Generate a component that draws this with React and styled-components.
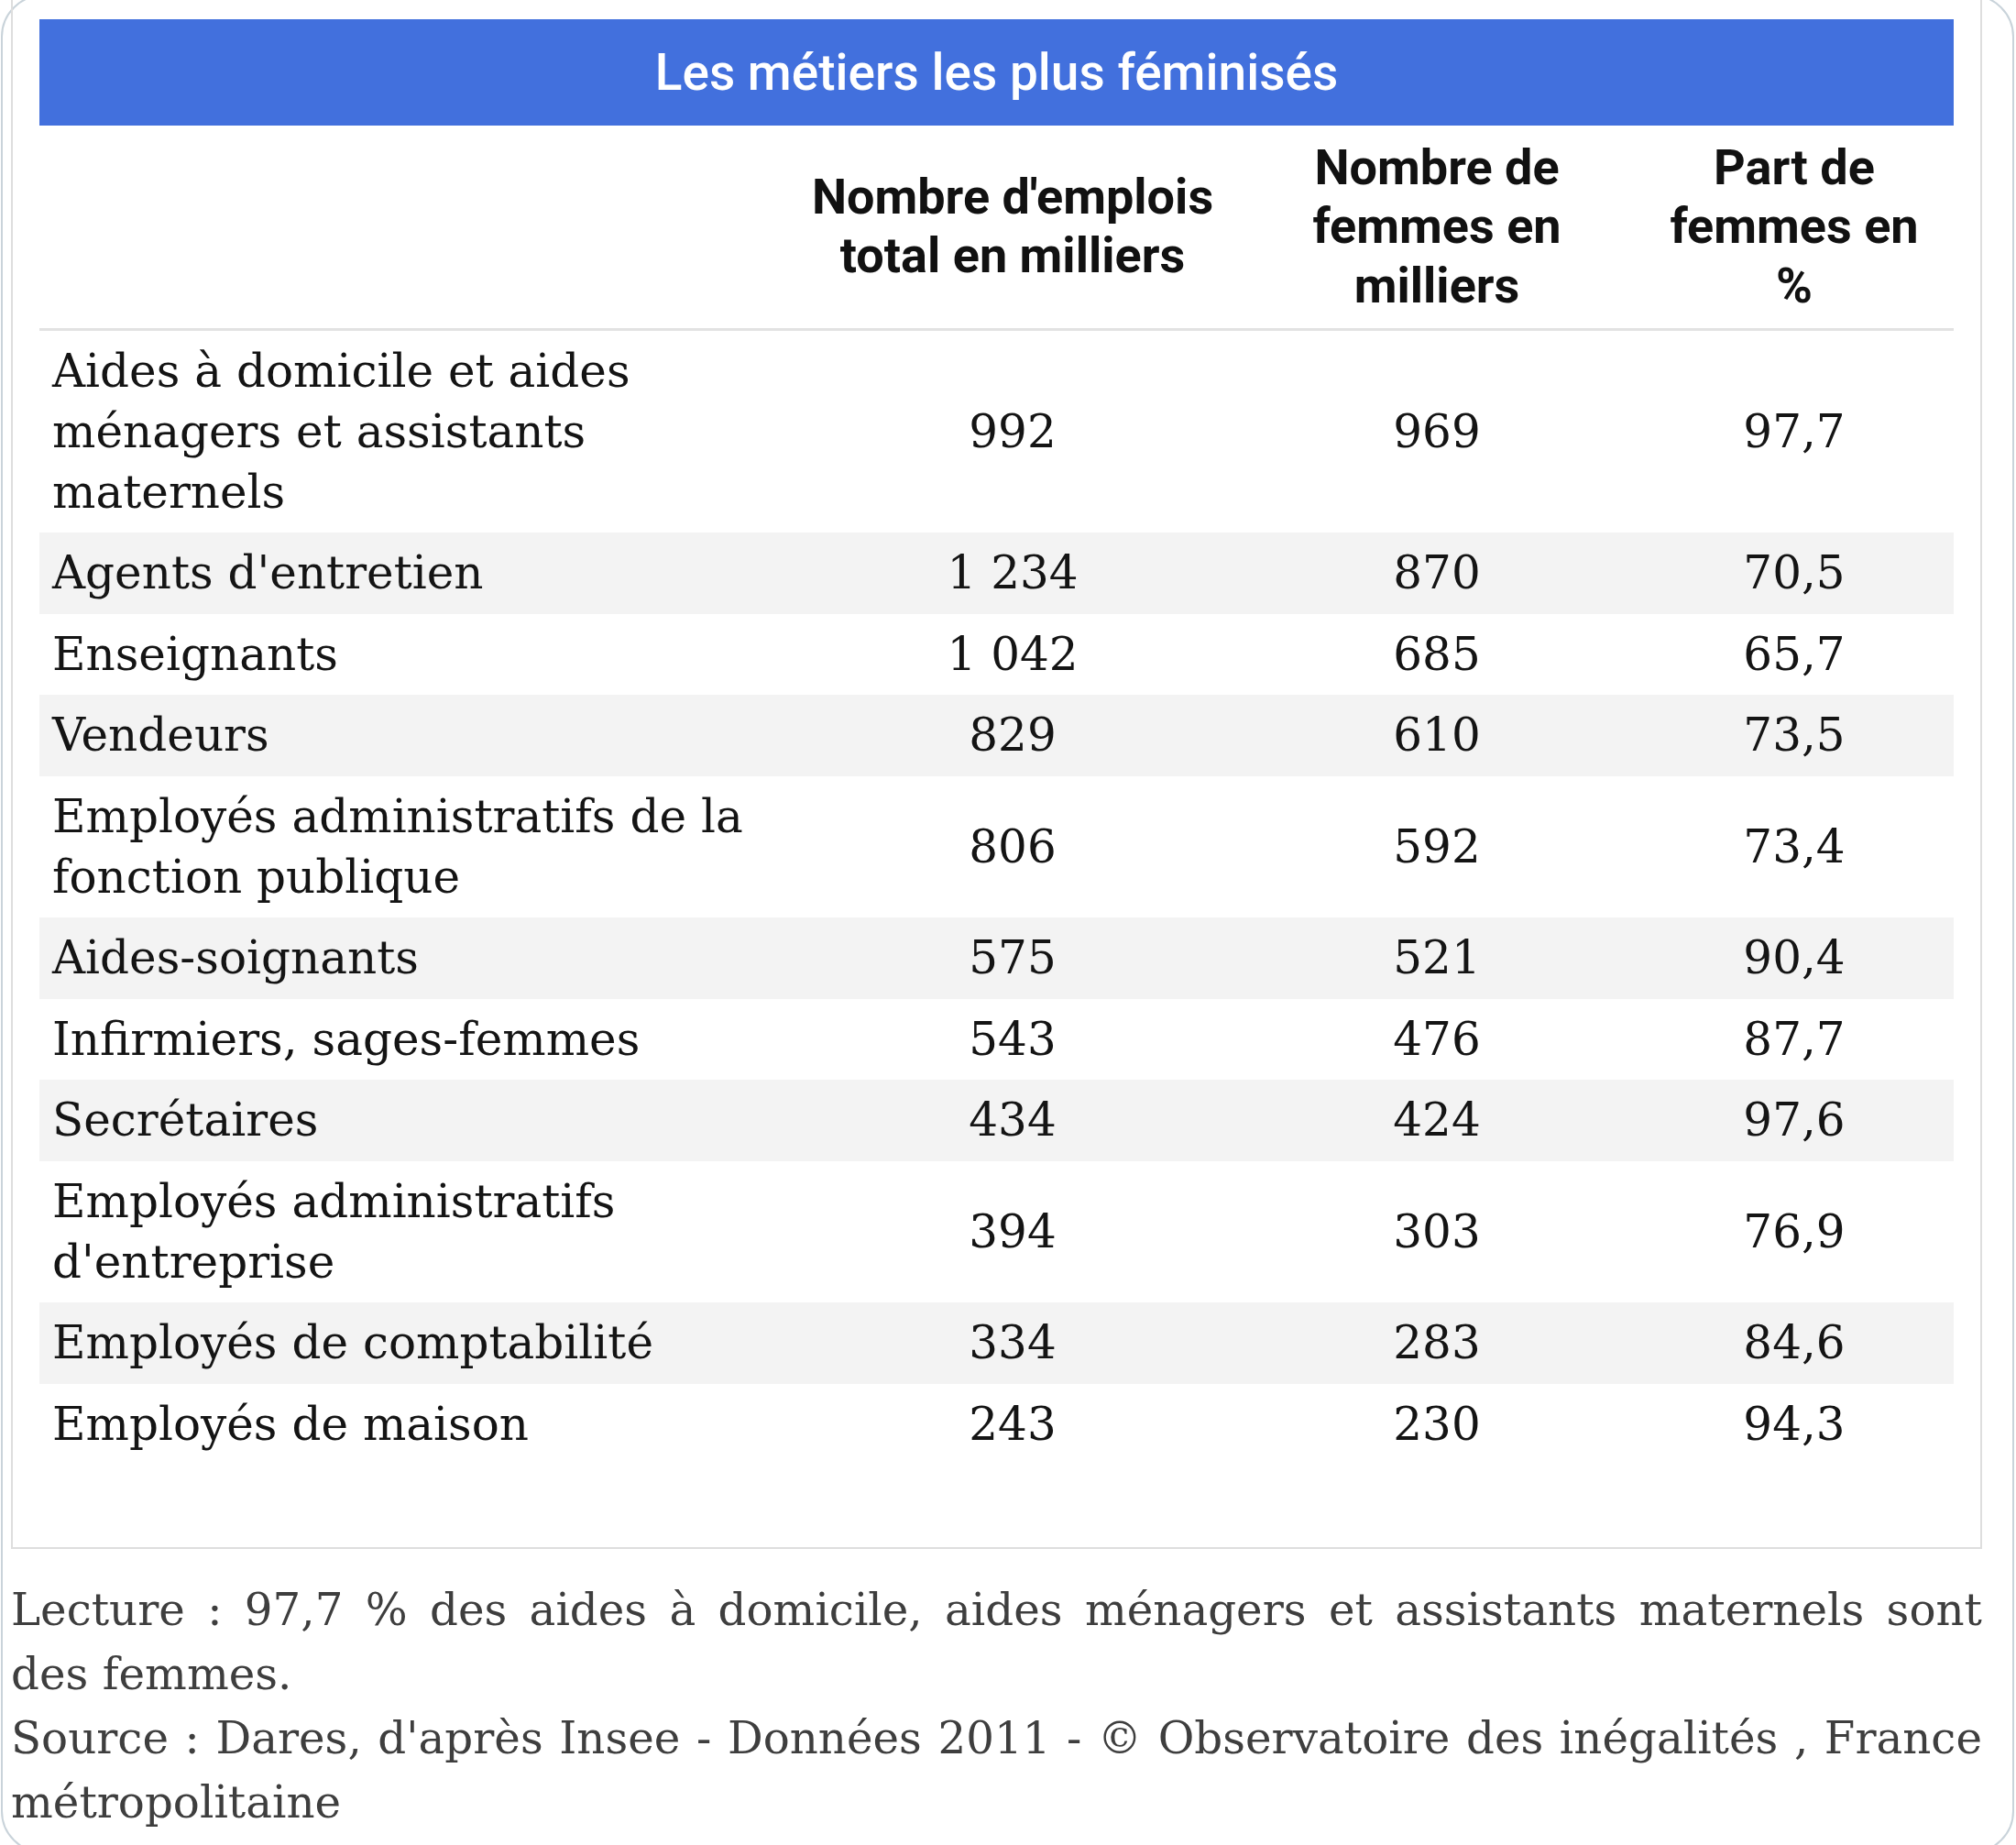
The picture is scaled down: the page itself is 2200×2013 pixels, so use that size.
import React from "react";
import styled, { createGlobalStyle } from "styled-components";

const GlobalStyle = createGlobalStyle`
  html, body {
    margin: 0;
    padding: 0;
    background: #ffffff;
    overflow: hidden;
  }
  * { box-sizing: border-box; }
`;

const Card = styled.div`
  margin: -6px 2px 0 1px;
  min-height: 2028px;
  border: 2px solid #c9d3da;
  border-radius: 46px;
  padding: 0 33px 0 9px;
  background: #fff;
`;

const Frame = styled.div`
  border: 2px solid #dedede;
  padding: 23px 29px 90px;
`;

const Title = styled.div`
  height: 116px;
  background: #4270dd;
  color: #fff;
  display: flex;
  align-items: center;
  justify-content: center;
  font-family: Roboto, "Open Sans", sans-serif;
  font-weight: 500;
  font-size: 55px;
`;

const Table = styled.table`
  width: 100%;
  table-layout: fixed;
  border-collapse: collapse;
`;

const Col = styled.col`
  width: ${(p) => p.$w}px;
`;

const HeadCell = styled.th`
  padding: 13.5px 14px;
  font-family: Roboto, "Open Sans", sans-serif;
  font-weight: 700;
  font-size: 54px;
  line-height: 64.5px;
  color: #111;
  text-align: center;
  vertical-align: middle;
  border-bottom: 3px solid #e2e2e2;
`;

const Row = styled.tr`
  background: ${(p) => (p.$shaded ? "#f3f3f3" : "transparent")};
`;

const Cell = styled.td`
  padding: 11.25px 14px;
  font-family: "DejaVu Serif", "Liberation Serif", serif;
  font-size: 50px;
  line-height: 66px;
  color: #141414;
  text-align: ${(p) => (p.$label ? "left" : "center")};
  vertical-align: middle;
`;

const Note = styled.div`
  margin-top: 31px;
  font-family: "DejaVu Serif", "Liberation Serif", serif;
  font-size: 48.3px;
  line-height: 70px;
  color: #3e3e3e;
`;

const NoteLine = styled.div`
  white-space: nowrap;
  text-align: ${(p) => (p.$justify ? "justify" : "left")};
  text-align-last: ${(p) => (p.$justify ? "justify" : "left")};
`;

const rows = [
  [["Aides à domicile et aides", "ménagers et assistants", "maternels"], "992", "969", "97,7"],
  [["Agents d'entretien"], "1 234", "870", "70,5"],
  [["Enseignants"], "1 042", "685", "65,7"],
  [["Vendeurs"], "829", "610", "73,5"],
  [["Employés administratifs de la", "fonction publique"], "806", "592", "73,4"],
  [["Aides-soignants"], "575", "521", "90,4"],
  [["Infirmiers, sages-femmes"], "543", "476", "87,7"],
  [["Secrétaires"], "434", "424", "97,6"],
  [["Employés administratifs", "d'entreprise"], "394", "303", "76,9"],
  [["Employés de comptabilité"], "334", "283", "84,6"],
  [["Employés de maison"], "243", "230", "94,3"],
];

const heads = [
  [],
  ["Nombre d'emplois", "total en milliers"],
  ["Nombre de", "femmes en", "milliers"],
  ["Part de", "femmes en", "%"],
];

const lines = (parts) =>
  parts.map((t, i) => (
    <React.Fragment key={i}>
      {i > 0 && <br />}
      {t}
    </React.Fragment>
  ));

export default function App() {
  return (
    <>
      <GlobalStyle />
      <Card>
        <Frame>
          <Title>Les métiers les plus féminisés</Title>
          <Table>
            <colgroup>
              <Col $w={815} />
              <Col $w={494} />
              <Col $w={432} />
              <Col $w={348} />
            </colgroup>
            <thead>
              <tr>
                {heads.map((h, i) => (
                  <HeadCell key={i}>{lines(h)}</HeadCell>
                ))}
              </tr>
            </thead>
            <tbody>
              {rows.map((r, i) => (
                <Row key={i} $shaded={i % 2 === 1}>
                  <Cell $label>{lines(r[0])}</Cell>
                  <Cell>{r[1]}</Cell>
                  <Cell>{r[2]}</Cell>
                  <Cell>{r[3]}</Cell>
                </Row>
              ))}
            </tbody>
          </Table>
        </Frame>
        <Note>
          <NoteLine $justify>
            Lecture : 97,7 % des aides à domicile, aides ménagers et assistants maternels sont
          </NoteLine>
          <NoteLine>des femmes.</NoteLine>
          <NoteLine $justify>
            Source : Dares, d'après Insee - Données 2011 - © Observatoire des inégalités , France
          </NoteLine>
          <NoteLine>métropolitaine</NoteLine>
        </Note>
      </Card>
    </>
  );
}
